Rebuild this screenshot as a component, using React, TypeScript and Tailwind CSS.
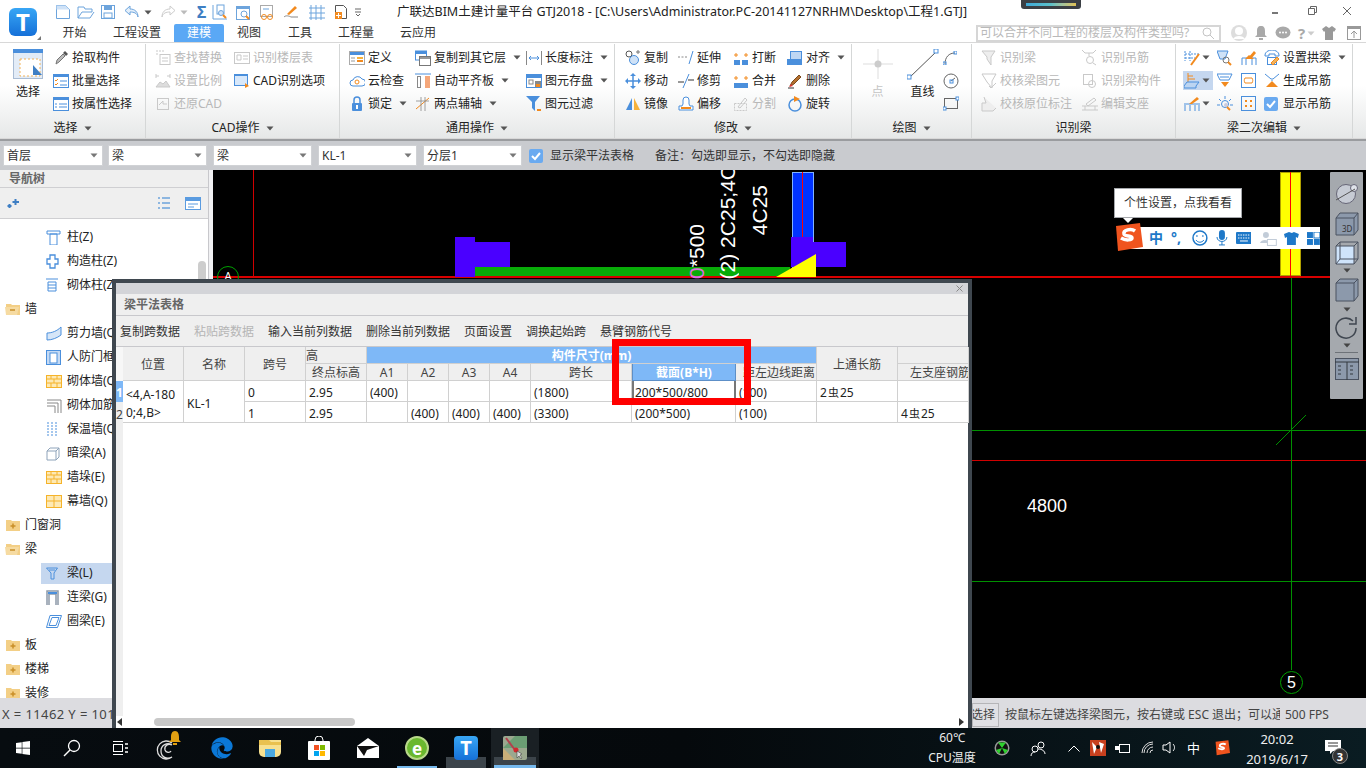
import React from "react";
import { FaEdge, FaWindows } from "react-icons/fa";

const B = "#4a8fdc";
const O = "#f28a1e";
const G = "#c9c9c9";

function S({ children, w = 16, h = 16, vb, cls = "" }: { children: React.ReactNode; w?: number; h?: number; vb?: string; cls?: string }) {
  return (
    <svg width={w} height={h} viewBox={vb ?? `0 0 ${w} ${h}`} fill="none" className={"shrink-0 " + cls}>
      {children}
    </svg>
  );
}

function Caret({ color = "#555" }: { color?: string }) {
  return (
    <svg width="8" height="5" viewBox="0 0 8 5" className="shrink-0">
      <path d="M0.5 0.5h7L4 4.5z" fill={color} />
    </svg>
  );
}

const ic: Record<string, React.ReactNode> = {
  pick: <S><path d="M3 14l1-4 6-6 2 2-6 6z" fill="#bbb" stroke="#777" /><path d="M10 3l2-2 3 3-2 2z" fill="#555" /></S>,
  batch: <S><rect x=".5" y="1.5" width="15" height="13" stroke={B} fill="#fff" /><rect x="0" y="1" width="16" height="3" fill={B} /><path d="M2 7l1 1 2-2M2 11l1 1 2-2" stroke={O} /><path d="M7 8h7M7 12h7" stroke={B} /></S>,
  attr: <S><rect x=".5" y="1.5" width="15" height="13" stroke={B} fill="#fff" /><rect x="0" y="1" width="16" height="3" fill={B} /><path d="M6 8h8M6 11h8" stroke={B} /><path d="M2 8h2M2 11h2" stroke={B} /></S>,
  find: <S><path d="M1 1h8M1 4h3" stroke={G} strokeDasharray="2 1" /><rect x="5" y="4.5" width="10" height="10" stroke={G} /><path d="M7 8h6M7 11h6" stroke={G} /></S>,
  scale: <S><path d="M1 14l4-5 3 2 3-3 4 6z" fill="#ddd" stroke={G} /><path d="M1 3h3M12 3h3M1 1v4M15 1v4" stroke={G} /></S>,
  restore: <S><rect x="2.5" y="2.5" width="11" height="11" stroke={G} /><path d="M4 9l4-4v3h4" stroke={G} /></S>,
  floor: <S><rect x=".5" y="2.5" width="15" height="11" stroke={G} /><path d="M3 5h4v5H3zM9 6h5M9 9h5" stroke={G} /></S>,
  cadopt: <S><rect x=".5" y="1.5" width="13" height="11" stroke={B} fill="#d8e8fa" /><rect x="0" y="1" width="14" height="2" fill={B} /><path d="M11 10l4 3-4 2z" fill={O} /></S>,
  def: <S><rect x=".5" y="1.5" width="15" height="13" stroke="#aaa" fill="#fff" /><rect x="1" y="2" width="14" height="3" fill={B} /><rect x="8" y="7" width="6" height="2" fill="#f7b23b" /><rect x="8" y="10" width="6" height="2" fill={O} /><path d="M2 8h4M2 11h4" stroke="#999" /></S>,
  cloud: <S><path d="M4 13a3 3 0 010-6 5 5 0 019-1 3.500 3.500 0 010 7z" stroke={B} fill="#fff" /><circle cx="8" cy="9" r="2" stroke={O} /></S>,
  lock: <S><path d="M5 7V4a3 3 0 016 0v3" stroke={B} strokeWidth="1.500" /><rect x="3" y="7" width="10" height="8" rx="1" fill={B} /><rect x="7" y="9" width="2" height="4" fill="#fff" /></S>,
  copyf: <S><rect x=".5" y="1" width="11" height="9" fill="#fff" stroke={B} /><rect x="1" y="1" width="11" height="3" fill={B} /><rect x="4.500" y="6.500" width="11" height="9" fill="#fff" stroke="#777" /><rect x="5" y="7" width="10" height="2" fill="#999" /></S>,
  auto: <S><path d="M0 1h16" stroke={B} /><rect x="2.500" y="3.500" width="3" height="11" stroke="#888" /><rect x="10" y="3" width="5" height="12" fill="#f5a77a" /></S>,
  twopt: <S><path d="M1 13L14 2" stroke={O} /><path d="M6 1v14M1 5h13M10 1v14" stroke="#888" strokeWidth=".8" /></S>,
  dim: <S><path d="M.5 1v14M15.500 1v14" stroke="#888" /><path d="M3 8h10M3 8l2-2M3 8l2 2M13 8l-2-2M13 8l-2 2" stroke={B} /></S>,
  save: <S><rect x=".5" y="1.500" width="15" height="13" stroke={B} fill="#fff" /><rect x="1" y="2" width="14" height="3" fill={B} /><rect x="3" y="7" width="4" height="4" stroke="#888" /><rect x="9" y="8" width="6" height="6" fill="#888" /><rect x="10" y="11" width="4" height="3" fill={O} /></S>,
  filter: <S><path d="M0 0h14L9 6v9L6 12V6z" fill={B} /><path d="M11 14h4" stroke={O} strokeWidth="2" /></S>,
  copy: <S><circle cx="4" cy="4" r="3" stroke="#555" /><circle cx="9" cy="10" r="4.500" stroke={B} fill="#cfe2f7" /><path d="M11 2h4M13 0v4" stroke="#777" /></S>,
  move: <S><path d="M8 1v14M1 8h14" stroke={B} strokeWidth="1.500" /><path d="M8 0l3 3H5zM8 16l3-3H5zM0 8l3-3v6zM16 8l-3-3v6z" fill={B} /></S>,
  mirror: <S><path d="M7 2v12H1z" fill={B} /><path d="M9 2v12h6z" fill="#f7b23b" /></S>,
  extend: <S><path d="M0 7h9" stroke="#888" strokeDasharray="2 1.500" /><path d="M15 1l-4 13" stroke={B} /></S>,
  trim: <S><path d="M0 9h6M10 7h6" stroke="#333" /><path d="M11 1L5 15" stroke={B} /></S>,
  offset: <S><path d="M1 14v-4h3l1-2V4a3 3 0 016 0v4l1 2h3v4z" stroke={B} fill="#fff" /><path d="M3 12h10" stroke={O} strokeWidth="2" /></S>,
  brk: <S><rect x="1" y="10" width="6" height="5" fill={B} /><rect x="9" y="10" width="6" height="5" fill={B} /><path d="M1 5h4M3 3v4M11 5h4M13 3v4" stroke={O} /></S>,
  merge: <S><rect x="1" y="10" width="14" height="5" fill={B} /><path d="M1 5h4M3 3v4M11 5h4M13 3v4" stroke={O} /></S>,
  split: <S><rect x="1.500" y="7.500" width="12" height="7" stroke={G} strokeDasharray="2 1" /><path d="M5 11l7-9 2 2-7 8z" stroke={G} /></S>,
  align: <S><rect x="3.500" y="1.500" width="11" height="8" fill="#bdd6f3" stroke={B} /><rect x="0" y="9" width="15" height="6" fill={B} /></S>,
  del: <S><path d="M1 15h6" stroke="#333" /><path d="M3 13l2-4 7-7 2 2-7 7z" fill="#b5712f" stroke="#7a4a1e" /><path d="M2 14l2-3 2 2z" fill="#d33" /></S>,
  rot: <S><circle cx="8" cy="9" r="6" stroke={B} strokeWidth="1.500" /><path d="M7 0l6 3-6 3z" fill={O} /></S>,
  arc: <S w={14} h={14}><path d="M2 13C2 6 6 2 12 2" stroke="#666" /><rect x="0" y="11" width="3" height="3" stroke={B} /><rect x="11" y="0" width="3" height="3" stroke={B} /></S>,
  circle: <S><circle cx="8" cy="8" r="7" stroke="#666" /><path d="M8 8l4-3" stroke="#666" /><rect x="7" y="7" width="3" height="3" stroke={B} /></S>,
  rect: <S><rect x="1.500" y="2.500" width="13" height="10" stroke="#666" /><rect x="13" y="1" width="3" height="3" fill="#fff" stroke={B} /><rect x="0" y="11" width="3" height="3" fill="#fff" stroke={B} /></S>,
  rb1: <S><path d="M1 1h13l-4 6v8L6 9V7z" stroke={G} fill="#eee" /></S>,
  rb2: <S><path d="M0 0l3 3h8l3-3M7 3v3" stroke={G} /><circle cx="8" cy="10" r="3.500" stroke={G} /><path d="M11 13l3 2" stroke={G} /></S>,
  rb3: <S><path d="M1 1h14l-4 7v7L6 9z" stroke={G} /><path d="M8 13l2 2 5-5" stroke={G} /></S>,
  rb4: <S><rect x="1.500" y="1.500" width="9" height="10" stroke={G} /><circle cx="10" cy="11" r="3.500" stroke={G} /></S>,
  rb5: <S><path d="M3 1l2 6H1v8h11l3-3" stroke={G} fill="#eee" /></S>,
  rb6: <S><path d="M0 10h16M0 14h16M3 14v-4M13 14v-4" stroke={G} /><path d="M4 8l8-6 2 2-8 6z" stroke={G} /></S>,
  g1: <S><path d="M1 1v10M6 1v10M1 4h14M1 8h10" stroke={B} strokeDasharray="2 1" /><path d="M7 15L15 4" stroke={O} strokeWidth="2" /></S>,
  g2: <S><path d="M0 1h11l-3 8H3z" fill="#cfe2f7" stroke={B} /><circle cx="9" cy="10" r="3" stroke="#777" /><path d="M11 12l3 3" stroke={O} strokeWidth="2" /></S>,
  g3: <S><path d="M1 15V8h14v7M5 15V9M11 15V9" stroke={B} /><path d="M7 8L13 1l2 2-5 6z" fill={O} /><path d="M4 9l4-4 5 4z" fill={O} /></S>,
  g4: <S><path d="M1 5a7 5 0 0114 0v1h-4V4H5v2H1z" stroke={B} /><rect x="3.500" y="7.500" width="9" height="7" stroke={B} /><path d="M7 13l6-6 2 2-6 6z" fill="#f2b35b" stroke={O} /></S>,
  g5: <S><path d="M4 0v9M4 3h5M4 6h7" stroke={O} /><path d="M0 13l3-4h12l-3 4v2H0z" fill="#bcd5f2" stroke={B} /></S>,
  g6: <S><path d="M0 1h15l-3 6H3z" stroke={B} /><path d="M3 4h9" stroke={B} /><path d="M4 9h8l-4 5z" fill={O} /></S>,
  g7: <S><rect x=".5" y=".5" width="14" height="14" stroke={B} /><path d="M4 5h7M4 10h7M4 5c-1 2-1 3 0 5M11 5c1 2 1 3 0 5" stroke={O} /></S>,
  g8: <S><path d="M1 1l6 5h2l6-5" stroke={B} /><path d="M8 7v1" stroke={B} /><path d="M8 8l6 6H2z" fill={O} /></S>,
  g9: <S><path d="M1 9v6M6 9v6M11 9v6M15 9v6M0 8h16" stroke={B} /><path d="M5 8l8-7 2 2-7 5z" fill={O} /></S>,
  g10: <S><circle cx="8" cy="8" r="3.500" stroke={B} /><path d="M8 0v3M2 3l2 2M14 3l-2 2M0 9h3M13 9h3" stroke={B} /><circle cx="9" cy="9" r="2" fill="#ccd" /><path d="M10 11l3 3" stroke={O} strokeWidth="2" /></S>,
  g11: <S><rect x=".5" y=".5" width="14" height="14" stroke={B} /><rect x="4" y="4" width="2" height="2" fill={O} /><rect x="9" y="4" width="2" height="2" fill={O} /><rect x="4" y="9" width="2" height="2" fill={O} /><rect x="9" y="9" width="2" height="2" fill={O} /></S>,
  chk: <svg width="14" height="14" viewBox="0 0 14 14" className="shrink-0"><rect width="14" height="14" rx="2" fill="#6aaaf0" /><path d="M3 7l3 3 5-6" stroke="#fff" strokeWidth="2" fill="none" /></svg>,
};

function Item({ i, t, off, caret, w }: { i: keyof typeof ic; t: string; off?: boolean; caret?: boolean; w: number }) {
  return (
    <div className="flex h-[23px] items-center gap-[3px]" style={{ width: w }}>
      {ic[i]}
      <span className={"whitespace-nowrap " + (off ? "text-[#b8b8b8]" : "text-[#222]")}>{t}</span>
      {caret && <span className="ml-[4px]"><Caret /></span>}
    </div>
  );
}

function Group({ w, label, caret = true, children }: { w: number; label: string; caret?: boolean; children: React.ReactNode }) {
  return (
    <div className="flex h-full shrink-0 flex-col border-r border-[#d5d7d7]" style={{ width: w }}>
      <div className="flex h-[72px] pt-[2px]">{children}</div>
      <div className="flex flex-1 items-center justify-center gap-[6px] pt-[2px] text-[#222]">
        {label}
        {caret && <Caret />}
      </div>
    </div>
  );
}

function Col({ children, pl = 0 }: { children: React.ReactNode; pl?: number }) {
  return <div className="flex flex-col" style={{ paddingLeft: pl }}>{children}</div>;
}

function Combo({ t, w }: { t: string; w: number }) {
  return (
    <div className="flex h-[21px] items-center justify-between border border-[#d0d2d5] bg-white pl-[3px] pr-[4px] text-[#333]" style={{ width: w }}>
      <span>{t}</span>
      <Caret color="#777" />
    </div>
  );
}

function Quick() {
  const c = "#6da4dc";
  return (
    <div className="flex h-[24px] items-center pl-[54px]">
      <S w={16} h={16} cls="ml-[1px]"><path d="M1.500 1.500h9l4 4v9h-13z" stroke={c} /><path d="M1.500 1.500h9l4 4H1.500z" fill="#cfe2f7" /></S>
      <S w={18} h={16} cls="ml-[6px]"><path d="M1 14V3h6l1 2h7v3H5l-4 6h12l4-6" stroke={c} /></S>
      <S w={16} h={16} cls="ml-[5px]"><rect x="1.500" y="1.500" width="13" height="13" stroke={c} /><rect x="4" y="2" width="8" height="4" fill={c} /><rect x="4" y="9" width="8" height="5" stroke={c} /></S>
      <S w={16} h={14} cls="ml-[8px]"><path d="M6 1L1 5.500 6 10V7c4 0 7 1 8 5 0-5-3-8-8-8z" stroke={c} fill="#e4effa" /></S>
      <span className="ml-[4px]"><Caret /></span>
      <S w={16} h={14} cls="ml-[8px]"><path d="M10 1l5 4.500L10 10V7c-4 0-7 1-8 5 0-5 3-8 8-8z" stroke="#ccc" /></S>
      <span className="ml-[4px]"><Caret color="#bbb" /></span>
      <span className="ml-[9px] w-[10px] text-[16px] font-bold leading-none text-[#3f7fc4]">Σ</span>
      <S w={16} h={17} cls="ml-[5px]"><path d="M1 1v14h14" stroke={c} /><rect x="5" y="1" width="7" height="9" stroke={c} /><circle cx="9" cy="9" r="2.500" fill="#cfe2f7" stroke={c} /><path d="M11 11l3 3" stroke={O} strokeWidth="2" /></S>
      <S w={17} h={17} cls="ml-[7px]"><rect x="1.500" y="2.500" width="13" height="13" stroke={c} /><rect x="1" y="2" width="14" height="3" fill={c} /><circle cx="9" cy="10" r="3" stroke={c} /><path d="M11 12l3 3" stroke={O} strokeWidth="2" /></S>
      <S w={17} h={17} cls="ml-[7px]"><rect x="1.500" y="1.500" width="12" height="11" stroke="#aaa" /><circle cx="5" cy="13" r="2.500" stroke={O} /><circle cx="11" cy="13" r="2.500" stroke={O} /><path d="M4 5h6" stroke={c} /></S>
      <S w={17} h={16} cls="ml-[7px]"><path d="M4 10l8-8 2 2-8 7z" fill={O} /><path d="M1 13c2-2 5-1 7 0h7" stroke="#888" /></S>
      <S w={18} h={17} cls="ml-[8px]"><path d="M1 4h16M1 9h16M1 14h16M3 1v15M8 1v15M13 1v15" stroke={c} /></S>
      <S w={14} h={16} cls="ml-[8px]"><path d="M1.500 1.500h8l3 3v10h-11z" stroke="#555" /><rect x="1" y="8" width="7" height="7" fill={O} /><path d="M4.500 9v5M2 11.500h5" stroke="#fff" /></S>
      <S w={8} h={9} cls="ml-[6px]"><path d="M1 1h6M1 4h6M2 6l2 2 2-2" stroke="#666" /></S>
      <span className="ml-[35px] whitespace-nowrap text-[12.5px] text-[#222]">广联达BIM土建计量平台 GTJ2018 - [C:\Users\Administrator.PC-20141127NRHM\Desktop\工程1.GTJ]</span>
    </div>
  );
}

function Tabs() {
  const tabs: [string, number, boolean?][] = [["开始", 25], ["工程设置", 48], ["建模", 50, true], ["视图", 24], ["工具", 24], ["工程量", 36], ["云应用", 36]];
  const gaps = [62, 26, 13, 13, 27, 26, 26];
  return (
    <div className="flex h-[18px] items-center pl-0">
      {tabs.map(([t, w, on], k) => (
        <span
          key={t}
          className={"flex h-[18px] items-center justify-center rounded-t-[2px] " + (on ? "bg-[#5aa8f5] text-white" : "text-[#333]")}
          style={{ width: w, marginLeft: gaps[k] }}
        >
          {t}
        </span>
      ))}
      <div className="ml-[540px] flex h-[17px] w-[245px] items-center justify-between border-2 border-[#d6d6d6] pl-[2px] pr-[5px] text-[#b9b9b9]">
        <span className="whitespace-nowrap">可以合并不同工程的楼层及构件类型吗?</span>
        <S w={12} h={12}><circle cx="5" cy="5" r="4" stroke="#c4c4c4" /><path d="M8 8l4 4" stroke="#c4c4c4" /></S>
      </div>
      <svg width="18" height="18" viewBox="0 0 18 18" className="ml-[9px]"><circle cx="9" cy="9" r="8" fill="#ddd" /><circle cx="9" cy="7" r="4" fill="#fff" /><path d="M3 15c2-4 10-4 12 0" fill="#fff" /></svg>
      <svg width="14" height="16" viewBox="0 0 14 16" className="ml-[6px]"><path d="M7 1c3 0 4 2 4 5v4l2 2H1l2-2V6c0-3 1-5 4-5z" fill="#a9a9a9" /><rect x="5" y="13" width="4" height="2" fill="#a9a9a9" /></svg>
      <svg width="16" height="14" viewBox="0 0 16 14" className="ml-[7px]"><ellipse cx="8" cy="6.500" rx="7.500" ry="6" fill="#a9a9a9" /><circle cx="5" cy="6.500" r="1" fill="#fff" /><circle cx="8" cy="6.500" r="1" fill="#fff" /><circle cx="11" cy="6.500" r="1" fill="#fff" /></svg>
      <span className="ml-[7px] text-[15px] font-bold leading-none text-[#a9a9a9]">?</span>
      <span className="ml-[2px]"><Caret color="#ccc" /></span>
      <svg width="14" height="14" viewBox="0 0 14 14" className="ml-[7px]"><path d="M4 0L0 3l2 3 1-1v9h8V5l1 1 2-3-4-3-3 2z" fill="#999" /></svg>
      <svg width="14" height="14" viewBox="0 0 14 14" className="ml-[11px]"><rect x=".5" y=".5" width="13" height="13" stroke="#999" fill="none" /><rect x="0" y="0" width="14" height="3" fill="#999" /><path d="M7 12V6M4 8l3-3 3 3" stroke="#999" fill="none" /></svg>
    </div>
  );
}

function Ribbon() {
  return (
    <div className="flex h-[97px] border-y border-[#d8d8d8] bg-gradient-to-b from-white from-45% to-[#e6e8e8] pt-[1px] text-xs">
      <Group w={146} label="选择">
        <div className="flex w-[53px] flex-col items-center pl-[3px] pt-[3px]">
          <svg width="31" height="31" viewBox="0 0 31 31"><rect x=".5" y=".5" width="29" height="29" fill="#e3ecf7" stroke="#a9bcd4" /><rect x="0" y="0" width="30" height="4" fill={B} /><rect x="7" y="10" width="20" height="17" fill="#fff" stroke="#f2b35b" strokeDasharray="2 2" /><path d="M20 16l9 10h-9z" fill="#3f7fc4" /></svg>
          <span className="mt-[4px] text-[#222]">选择</span>
        </div>
        <Col>
          <Item i="pick" t="拾取构件" w={90} />
          <Item i="batch" t="批量选择" w={90} />
          <Item i="attr" t="按属性选择" w={90} />
        </Col>
      </Group>
      <Group w={194} label="CAD操作">
        <Col pl={9}>
          <Item i="find" t="查找替换" off w={79} />
          <Item i="scale" t="设置比例" off w={79} />
          <Item i="restore" t="还原CAD" off w={79} />
        </Col>
        <Col>
          <Item i="floor" t="识别楼层表" off w={100} />
          <Item i="cadopt" t="CAD识别选项" w={100} />
        </Col>
      </Group>
      <Group w={275} label="通用操作">
        <Col pl={9}>
          <Item i="def" t="定义" w={66} />
          <Item i="cloud" t="云检查" w={66} />
          <Item i="lock" t="锁定" caret w={66} />
        </Col>
        <Col>
          <Item i="copyf" t="复制到其它层" caret w={111} />
          <Item i="auto" t="自动平齐板" caret w={111} />
          <Item i="twopt" t="两点辅轴" caret w={111} />
        </Col>
        <Col>
          <Item i="dim" t="长度标注" caret w={85} />
          <Item i="save" t="图元存盘" caret w={85} />
          <Item i="filter" t="图元过滤" w={85} />
        </Col>
      </Group>
      <Group w={237} label="修改">
        <Col pl={10}>
          <Item i="copy" t="复制" w={53} />
          <Item i="move" t="移动" w={53} />
          <Item i="mirror" t="镜像" w={53} />
        </Col>
        <Col>
          <Item i="extend" t="延伸" w={55} />
          <Item i="trim" t="修剪" w={55} />
          <Item i="offset" t="偏移" w={55} />
        </Col>
        <Col>
          <Item i="brk" t="打断" w={54} />
          <Item i="merge" t="合并" w={54} />
          <Item i="split" t="分割" off w={54} />
        </Col>
        <Col>
          <Item i="align" t="对齐" caret w={60} />
          <Item i="del" t="删除" w={60} />
          <Item i="rot" t="旋转" w={60} />
        </Col>
      </Group>
      <Group w={120} label="绘图">
        <div className="flex w-[50px] flex-col items-center pl-[1px] pt-[3px]">
          <svg width="30" height="31" viewBox="0 0 30 31"><path d="M0 15h30M15 0v30" stroke="#ddd" /><circle cx="15" cy="15" r="3.500" fill="#ccc" /></svg>
          <span className="mt-[4px] text-[#c4c4c4]">点</span>
        </div>
        <div className="flex w-[41px] flex-col items-center pt-[3px]">
          <svg width="32" height="31" viewBox="0 0 32 31"><path d="M2 29L30 2" stroke="#555" /><rect x="0" y="26" width="4" height="4" fill="#fff" stroke={B} /><rect x="27" y="0" width="4" height="4" fill="#fff" stroke={B} /></svg>
          <span className="mt-[4px] text-[#222]">直线</span>
        </div>
        <Col>
          <div className="flex h-[23px] items-center">{ic.arc}</div>
          <div className="flex h-[23px] items-center">{ic.circle}</div>
          <div className="flex h-[23px] items-center">{ic.rect}</div>
        </Col>
      </Group>
      <Group w={204} label="识别梁" caret={false}>
        <Col pl={9}>
          <Item i="rb1" t="识别梁" off w={101} />
          <Item i="rb3" t="校核梁图元" off w={101} />
          <Item i="rb5" t="校核原位标注" off w={101} />
        </Col>
        <Col>
          <Item i="rb2" t="识别吊筋" off w={90} />
          <Item i="rb4" t="识别梁构件" off w={90} />
          <Item i="rb6" t="编辑支座" off w={90} />
        </Col>
      </Group>
      <Group w={177} label="梁二次编辑">
        <Col pl={7}>
          <div className="flex h-[23px] w-[30px] items-center gap-[2px] pl-[1px]">{ic.g1}<Caret /></div>
          <div className="my-[2px] flex h-[19px] w-[30px] items-center gap-[2px] bg-[#c5d7ef] pl-[1px]">{ic.g5}<Caret /></div>
          <div className="flex h-[23px] w-[30px] items-center gap-[2px] pl-[1px]">{ic.g9}<Caret /></div>
        </Col>
        <Col pl={4}>
          <div className="flex h-[23px] items-center">{ic.g2}</div>
          <div className="flex h-[23px] items-center">{ic.g6}</div>
          <div className="flex h-[23px] items-center">{ic.g10}</div>
        </Col>
        <Col pl={8}>
          <div className="flex h-[23px] items-center">{ic.g3}</div>
          <div className="flex h-[23px] items-center">{ic.g7}</div>
          <div className="flex h-[23px] items-center">{ic.g11}</div>
        </Col>
        <Col pl={7}>
          <Item i="g4" t="设置拱梁" caret w={90} />
          <Item i="g8" t="生成吊筋" w={90} />
          <div className="flex h-[23px] items-center gap-[5px]">{ic.chk}<span className="text-[#222]">显示吊筋</span></div>
        </Col>
      </Group>
    </div>
  );
}

function OptionBar() {
  return (
    <div className="flex h-[31px] items-center border-t-2 border-[#9a9c9f] bg-[#c9cbcf] pl-[3px] text-xs">
      <Combo t="首层" w={100} />
      <span className="ml-[5px]"><Combo t="梁" w={99} /></span>
      <span className="ml-[6px]"><Combo t="梁" w={99} /></span>
      <span className="ml-[6px]"><Combo t="KL-1" w={99} /></span>
      <span className="ml-[6px]"><Combo t="分层1" w={99} /></span>
      <span className="ml-[7px]">{ic.chk}</span>
      <span className="ml-[7px] text-[#333]">显示梁平法表格</span>
      <span className="ml-[21px] text-[#333]">备注：勾选即显示，不勾选即隐藏</span>
    </div>
  );
}

function Member({ t, icon, sel }: { t: string; icon: React.ReactNode; sel?: boolean }) {
  return (
    <div className="flex h-[24px] items-center pl-[5px]">
      <div className={"ml-[36px] flex h-[21px] flex-1 items-center pl-[5px] " + (sel ? "bg-[#c5d7ef]" : "")}>
        <span className="flex w-[21px] shrink-0 items-center">{icon}</span>
        <span className="whitespace-nowrap text-[#222]">{t}</span>
      </div>
    </div>
  );
}

function Folder({ t, open }: { t: string; open?: boolean }) {
  return (
    <div className="flex h-[24px] items-center pl-[5px]">
      <svg width="17" height="14" viewBox="0 0 17 14" className="shrink-0">
        <path d="M1 2h5l1 1h8v10H1z" fill="#f3cf86" />
        {open ? <path d="M0 5h14l-2 8H1z" fill="#f6dba2" /> : null}
        <path d={open ? "M5 8h5" : "M5.500 8h5M8 5.500v5"} stroke="#c98f28" strokeWidth="1.500" />
      </svg>
      <span className="ml-[3px] whitespace-nowrap text-[#222]">{t}</span>
    </div>
  );
}

function Tree() {
  const bl = B;
  const Yb = ({ kind = 0 }: { kind?: number }) => (
    <S w={16} h={13}><rect x=".5" y=".5" width="15" height="12" stroke="#f5b32a" fill="#fde9b5" /><path d={kind ? "M0 6h16M8 0v13" : "M0 4h16M0 8h16M5 0v4M11 0v4M8 4v4M5 8v5M11 8v5"} stroke="#f5b32a" /></S>
  );
  return (
    <div className="w-[213px] shrink-0 bg-[#f1f1f3]">
      <div className="relative flex h-full w-[209px] flex-col overflow-hidden border-r border-[#c8c8cc] bg-white text-xs">
        <div className="flex h-[19px] items-center border-b border-[#cfcfd2] bg-[#efefef] pl-[9px] pt-[1px] font-bold text-[#666]">导航树</div>
        <div className="flex h-[31px] shrink-0 items-center border-b border-[#cfcfd2] bg-[#efefef] pl-[7px] pt-[1px]">
          <svg width="13" height="10" viewBox="0 0 13 10"><path d="M2.500 5v4M.5 7h4M8.500 0v6M5.500 3h6.500" stroke="#3f7fc4" strokeWidth="2" /></svg>
          <svg width="14" height="13" viewBox="0 0 14 13" className="ml-[137px]"><path d="M1 1h2M1 6h2M1 11h2M5 1h8M5 6h8M5 11h8" stroke="#6da4dc" strokeWidth="1.500" /></svg>
          <svg width="16" height="13" viewBox="0 0 16 13" className="ml-[14px]"><rect x=".5" y=".5" width="15" height="12" stroke="#5a9be0" fill="#fff" /><rect x="0" y="0" width="16" height="4" fill="#5a9be0" /><path d="M3 7h10M3 10h6" stroke="#5a9be0" /></svg>
        </div>
        <div className="flex flex-col pt-[6px]">
          <Member t="柱(Z)" icon={<S w={15} h={15}><path d="M1 1h13v3H1zM4 4h7v11H4z" stroke={bl} /></S>} />
          <Member t="构造柱(Z)" icon={<S w={13} h={15}><path d="M4 1h5v4h3v5H9v4H4v-4H1V5h3z" stroke={bl} strokeWidth="1.300" /></S>} />
          <Member t="砌体柱(Z)" icon={<S w={12} h={14}><path d="M0 1h12M2 4h8v9H2zM2 7h8M2 10h8" stroke={bl} /></S>} />
          <Folder t="墙" open />
          <Member t="剪力墙(Q)" icon={<S w={16} h={15}><path d="M1 7c5 0 10-2 14-6v8c-4 3-9 5-14 5z" fill="#d6e6f8" stroke={bl} /></S>} />
          <Member t="人防门框墙" icon={<S w={15} h={15}><rect x=".5" y=".5" width="14" height="14" fill="#c5daf4" stroke={bl} /><rect x="4" y="3" width="7" height="10" fill="#fff" stroke={bl} /></S>} />
          <Member t="砌体墙(Q)" icon={<Yb />} />
          <Member t="砌体加筋(Y)" icon={<S w={16} h={15}><path d="M1 2h14v13M1 5h11v10M1 8h8v7" stroke="#888" /></S>} />
          <Member t="保温墙(Q)" icon={<S w={12} h={15}><path d="M2 0v15M6 0v15M10 0v15" stroke={bl} strokeDasharray="2 1" /></S>} />
          <Member t="暗梁(A)" icon={<S w={14} h={15}><path d="M1 5l3-3h9v9l-3 3H1z" fill="#fff" stroke="#8ea3ba" /><path d="M1 5h9v9M10 5l3-3" stroke="#8ea3ba" /></S>} />
          <Member t="墙垛(E)" icon={<Yb />} />
          <Member t="幕墙(Q)" icon={<Yb kind={1} />} />
          <Folder t="门窗洞" />
          <Folder t="梁" open />
          <Member sel t="梁(L)" icon={<S w={13} h={13}><path d="M.5 1h11L8 6v6H5V6z" stroke={bl} /><path d="M3 3h6" stroke={bl} /></S>} />
          <Member t="连梁(G)" icon={<S w={14} h={15}><path d="M1 15V1h11v14M3 15V4h7v11" stroke="#8d99a8" strokeWidth="1.500" /><rect x="2" y="2" width="9" height="2" fill={bl} /></S>} />
          <Member t="圈梁(E)" icon={<S w={16} h={13}><path d="M4 .5h11.500l-4 12H.5z" stroke={bl} /><path d="M6 2.500h7L10 10.500H3z" stroke={bl} /></S>} />
          <Folder t="板" />
          <Folder t="楼梯" />
          <Folder t="装修" />
        </div>
        <div className="absolute left-[198px] top-[91px] h-[40px] w-[8px] rounded-full bg-[#cdcdcd]" />
      </div>
    </div>
  );
}

const H = "flex items-center justify-center overflow-hidden whitespace-nowrap border-b border-r border-[#d0d0d0] bg-[#efefef] pt-[2px] text-[#444]";
const C = "flex items-center overflow-hidden whitespace-nowrap border-b border-r border-[#d0d0d0] bg-white pl-[3px] pt-[4px] text-[#222]";

function Dialog() {
  return (
    <div className="absolute left-[112px] top-[279px] flex h-[449px] w-[860px] flex-col border-[4px] border-b-0 border-[#3f474f] bg-white text-xs">
      <div className="flex h-[11px] items-center justify-end bg-[#d3d4d8] pr-[5px]">
        <svg width="7" height="7" viewBox="0 0 7 7"><path d="M.5.5l6 6M6.500.5l-6 6" stroke="#888" /></svg>
      </div>
      <div className="flex h-[22px] items-center border-b border-[#c8c8cc] bg-[#efefef] pl-[8px] pt-[1px] font-bold text-[#666]">梁平法表格</div>
      <div className="flex h-[31px] items-center border-b border-[#c8c8cc] bg-[#efefef] pl-[4px] pt-[1px] text-[#333]">
        <span>复制跨数据</span>
        <span className="ml-[14px] text-[#b5b5b5]">粘贴跨数据</span>
        <span className="ml-[14px]">输入当前列数据</span>
        <span className="ml-[14px]">删除当前列数据</span>
        <span className="ml-[14px]">页面设置</span>
        <span className="ml-[14px]">调换起始跨</span>
        <span className="ml-[14px]">悬臂钢筋代号</span>
      </div>
      <div className="grid grid-cols-[7px_61px_61px_61px_61px_41px_41px_41px_41px_101px_104px_81px_81px_71px] grid-rows-[17px_17px_21px_21px]">
        <div className="row-span-2 bg-[#f7f7f7]" />
        <div className={H + " row-span-2"}>位置</div>
        <div className={H + " row-span-2"}>名称</div>
        <div className={H + " row-span-2"}>跨号</div>
        <div className={H + " !justify-start"}>高</div>
        <div className={H + " col-span-7 !bg-[#7eb8f7] font-bold !text-white"}>构件尺寸(mm)</div>
        <div className={H + " row-span-2"}>上通长筋</div>
        <div className={H} />
        <div className={H}>终点标高</div>
        <div className={H}>A1</div>
        <div className={H}>A2</div>
        <div className={H}>A3</div>
        <div className={H}>A4</div>
        <div className={H}>跨长</div>
        <div className={H + " border-l !border-[#5d8fc7] !bg-[#7eb8f7] font-bold !text-white"}>截面(B*H)</div>
        <div className={H + " !justify-end pr-[1px]"}>距左边线距离</div>
        <div className={H + " !justify-start pl-[12px]"}>左支座钢筋</div>

        <div className="flex items-center justify-center bg-[#7eb8f7] pt-[2px] font-bold text-white">1</div>
        <div className={C + " row-span-2 !whitespace-normal leading-[18px]"}><span>&lt;4,A-180<br />0;4,B&gt;</span></div>
        <div className={C + " row-span-2"}>KL-1</div>
        <div className={C}>0</div>
        <div className={C}>2.95</div>
        <div className={C}>(400)</div>
        <div className={C} />
        <div className={C} />
        <div className={C} />
        <div className={C}>(1800)</div>
        <div className={C + " border-l-2 border-r-2 !border-x-[#777] !pl-[1px]"}>200*500/800</div>
        <div className={C}>(100)</div>
        <div className={C}>2<span className="mx-[1px] text-[11px]">虫</span>25</div>
        <div className={C} />

        <div className="flex items-center justify-center bg-[#efefef] pt-[4px] text-[#444]">2</div>
        <div className={C}>1</div>
        <div className={C}>2.95</div>
        <div className={C} />
        <div className={C}>(400)</div>
        <div className={C}>(400)</div>
        <div className={C}>(400)</div>
        <div className={C}>(3300)</div>
        <div className={C}>(200*500)</div>
        <div className={C}>(100)</div>
        <div className={C} />
        <div className={C}>4<span className="mx-[1px] text-[11px]">虫</span>25</div>
      </div>
      <div className="flex flex-1 flex-col">
        <div className="flex-1 border-l-[7px] border-[#efefef]" />
        <div className="flex h-[12px] items-center px-[1px]">
          <svg width="5" height="8" viewBox="0 0 5 8"><path d="M5 0v8L0 4z" fill="#333" /></svg>
          <div className="ml-[32px] h-[8px] w-[201px] rounded-full bg-[#c8c8c8]" />
          <svg width="5" height="8" viewBox="0 0 5 8" className="ml-auto mr-[3px]"><path d="M0 0v8l5-4z" fill="#333" /></svg>
        </div>
      </div>
      <div className="absolute left-[496px] top-[56px] h-[66px] w-[139px] border-[7px] border-[#ff0000]" />
    </div>
  );
}

function CanvasLayer() {
  const vert = "absolute [writing-mode:vertical-rl] rotate-180 whitespace-nowrap font-['Liberation_Sans',sans-serif] text-white";
  return (
    <div className="relative flex-1 overflow-hidden bg-black">
      <div className="absolute left-[40px] top-0 h-[107px] w-px bg-[#d00000]" />
      <div className="absolute left-0 top-[106px] h-[2px] w-[1120px] bg-[#d80000]" />
      <div className="absolute left-[759px] top-[290px] h-px w-[394px] bg-[#d00000]" />
      <div className="absolute left-[759px] top-[260px] h-px w-[394px] bg-[#009000]" />
      <div className="absolute left-[759px] top-[411px] h-px w-[394px] bg-[#009000]" />
      <div className="absolute left-[1078px] top-[108px] h-[392px] w-px bg-[#009000]" />
      <svg width="30" height="30" viewBox="0 0 30 30" className="absolute left-[1063px] top-[245px]"><path d="M0 30L30 0" stroke="#009000" /></svg>
      <div className="absolute left-[1067px] top-[2px] h-[104px] w-[21px] border border-[#b0a000] bg-[#ffff00]" />
      <div className="absolute left-[1077px] top-[2px] h-[104px] w-px bg-[#ff0000]" />
      <div className="absolute left-[579px] top-[2px] h-[104px] w-[22px] border border-[#7fb2ff] bg-[#0033ff]" />
      <div className="absolute left-[589px] top-[2px] h-[104px] w-px bg-[#ff0000]" />
      <div className="absolute left-[242px] top-[67px] h-[40px] w-[20px] bg-[#4a00ff]" />
      <div className="absolute left-[262px] top-[72px] h-[26px] w-[35px] bg-[#4a00ff]" />
      <div className="absolute left-[578px] top-[67px] h-[30px] w-[22px] bg-[#4a00ff]" />
      <div className="absolute left-[600px] top-[72px] h-[25px] w-[33px] bg-[#4a00ff]" />
      <div className="absolute left-[262px] top-[97px] h-[9px] w-[315px] bg-[#08ab08]" />
      <svg width="40" height="24" viewBox="0 0 40 24" className="absolute left-[563px] top-[83px]"><path d="M0 24L40 1v23z" fill="#ffff00" /></svg>
      <div className={vert + " bottom-[419px] left-[472px] text-[21px] leading-[24px]"}><span className="text-[#e070e0]">0</span>*500</div>
      <div className={vert + " bottom-[419px] left-[503px] text-[21px] leading-[24px]"}>(2) 2C25;4C</div>
      <div className={vert + " left-[535px] top-[15px] text-[21px] leading-[24px]"}>4C25</div>
      <div className="absolute left-[4px] top-[96px] flex h-[22px] w-[22px] items-center justify-center rounded-full border border-[#00a000] text-xs text-white">A</div>
      <div className="absolute left-[1067px] top-[501px] flex h-[23px] w-[23px] items-center justify-center rounded-full border border-[#00a000] font-['Liberation_Sans',sans-serif] text-[16px] text-white">5</div>
      <div className="absolute left-[814px] top-[327px] font-['Liberation_Sans',sans-serif] text-[18px] text-white">4800</div>

      {/* IME */}
      <div className="absolute left-[901px] top-[18px] flex h-[30px] w-[128px] items-center justify-center border border-[#a5a8ac] bg-white text-xs text-[#333]">个性设置，点我看看</div>
      <svg width="10" height="5" viewBox="0 0 10 5" className="absolute left-[910px] top-[48px]"><path d="M0 0h10L5 5z" fill="#fff" /></svg>
      <div className="absolute left-[917px] top-[57px] flex h-[22px] w-[190px] items-center bg-white pl-[19px]">
        <span className="text-[14px] font-bold leading-none text-[#1e78c8]">中</span>
        <span className="ml-[8px] w-[14px] text-[14px] font-bold leading-none text-[#1e78c8]">°,</span>
        <svg width="16" height="16" viewBox="0 0 16 16" className="ml-[7px]"><circle cx="8" cy="8" r="7" stroke="#1e78c8" strokeWidth="1.500" fill="none" /><path d="M5 5v2M11 5v2M4 10c2 3 6 3 8 0" stroke="#1e78c8" fill="none" /></svg>
        <svg width="12" height="16" viewBox="0 0 12 16" className="ml-[8px]"><rect x="3" y="0" width="6" height="10" rx="3" fill="#1e78c8" /><path d="M1 7c0 6 10 6 10 0M6 12v3M3 15h6" stroke="#1e78c8" fill="none" /></svg>
        <svg width="16" height="12" viewBox="0 0 16 12" className="ml-[8px]"><rect width="16" height="12" rx="1" fill="#1e78c8" /><path d="M2 3h12M2 6h12" stroke="#fff" strokeDasharray="1.500 1" /><path d="M4 9h8" stroke="#fff" /></svg>
        <svg width="17" height="15" viewBox="0 0 17 15" className="ml-[9px]"><circle cx="6" cy="4" r="3" fill="#c2ccd8" /><path d="M0 12c1-4 9-4 10 0z" fill="#c2ccd8" /><rect x="7.500" y="8.500" width="9" height="6" fill="#fff" stroke="#c2ccd8" /></svg>
        <svg width="15" height="13" viewBox="0 0 15 13" className="ml-[7px]"><path d="M5 0L0 2l1 4 2-1v8h9V5l2 1 1-4-5-2-2 1z" fill="#1e78c8" /></svg>
        <svg width="13" height="13" viewBox="0 0 13 13" className="ml-[8px]"><rect width="6" height="6" fill="#1e78c8" /><rect x="7" y="0" width="6" height="6" fill="#fff" stroke="#1e78c8" /><rect y="7" width="6" height="6" fill="#1e78c8" /><rect x="7" y="7" width="6" height="6" fill="#1e78c8" /></svg>
      </div>
      <svg width="30" height="29" viewBox="0 0 30 29" className="absolute left-[900px] top-[53px]">
        <path d="M3 3l24-3 3 24-25 4z" fill="#f0541e" />
        <path d="M22 8c-4-3-12-1-11 3 1 3 8 1 8 4 0 2-6 3-11 0" stroke="#fff" strokeWidth="3.500" fill="none" />
      </svg>

      {/* view toolbar */}
      <div className="absolute left-[1117px] top-[2px] flex h-[227px] w-[33px] flex-col items-center rounded-[1px] bg-[#a5a9ae] pt-[11px]">
        <svg width="24" height="22" viewBox="0 0 24 22"><circle cx="11" cy="11" r="9.500" fill="#c6cbd4" stroke="#667" /><circle cx="19" cy="5" r="3.500" fill="#dfe3ea" stroke="#667" /><path d="M1 17L20 6" stroke="#555" /></svg>
        <svg width="24" height="24" viewBox="0 0 24 24" className="mt-[7px]"><path d="M1 6h18v17H1zM1 6l4-5h18v17l-4 5M19 6l4-5" fill="#8c99ab" stroke="#4a5260" /><text x="7" y="20" fontSize="8" fill="#333">3D</text></svg>
        <svg width="24" height="24" viewBox="0 0 24 24" className="mt-[5px]"><path d="M1 5h18v18H1z" fill="#cfe4fb" stroke="#4a5260" /><path d="M1 5l4-4h18v17l-4 5M19 5l4-4M5 1v17h18M5 18l-4 5" fill="none" stroke="#4a5260" /></svg>
        <span className="mt-[3px]"><Caret color="#444" /></span>
        <svg width="24" height="24" viewBox="0 0 24 24" className="mt-[5px]"><path d="M1 5h18v18H1zM1 5l4-4h18v17l-4 5M19 5l4-4" fill="#8c99ab" stroke="#4a5260" /></svg>
        <span className="mt-[5px]"><Caret color="#444" /></span>
        <svg width="24" height="23" viewBox="0 0 24 23" className="mt-[4px]"><path d="M21 12a10 10 0 11-3-7" stroke="#3f4650" strokeWidth="1.500" fill="none" /><path d="M21 1v7h-7" stroke="#3f4650" strokeWidth="1.500" fill="none" /></svg>
        <span className="mt-[4px]"><Caret color="#444" /></span>
        <div className="mt-[4px] h-px w-[23px] bg-[#6d7278]" />
        <svg width="24" height="23" viewBox="0 0 24 23" className="mt-[4px]"><rect x=".5" y="1.500" width="23" height="21" fill="#8c99ab" stroke="#4a5260" /><path d="M0 5h24M12 5v18M3 9h3M3 13h3M3 17h3M15 9h3M15 13h3M15 17h3" stroke="#33383f" /></svg>
      </div>
    </div>
  );
}

function Status() {
  return (
    <div className="flex h-[30px] items-center bg-[#dcdce0] pt-[3px] text-xs text-[#444]">
      <span className="w-[112px] shrink-0 overflow-hidden whitespace-nowrap pl-[2px] text-[13px] tracking-[0.4px]">X = 11462 Y = 101</span>
      <div className="ml-[860px] flex h-[24px] w-[27px] shrink-0 items-center justify-end overflow-hidden border border-[#b5b5b8] bg-[#e0e0e4] pr-[3px]">
        <span className="whitespace-nowrap">选择</span>
      </div>
      <span className="ml-[6px] w-[275px] shrink-0 overflow-hidden whitespace-nowrap">按鼠标左键选择梁图元，按右键或 ESC 退出；可以通</span>
      <span className="ml-[5px] whitespace-nowrap">500 FPS</span>
    </div>
  );
}

function Taskbar() {
  return (
    <div className="relative flex h-[40px] items-center bg-gradient-to-r from-[#070c10] via-[#05090c] to-[#0a1c22] text-xs text-white">
      <div className="absolute left-[491px] top-0 h-[40px] w-[48px] bg-[#1a2024]" />
      <div className="absolute left-[446px] top-[29px] h-[11px] w-[40px] bg-[#3c444a]" />
      <div className="absolute left-[494px] top-[29px] h-[8px] w-[42px] bg-[#3c444a]" />
      <div className="absolute bottom-0 left-[397px] h-[2px] w-[40px] bg-[#76b9ed]" />
      <div className="absolute bottom-0 left-[494px] h-[3px] w-[42px] bg-[#76b9ed]" />
      <FaWindows className="relative ml-[15px] text-[16px]" />
      <svg width="18" height="18" viewBox="0 0 18 18" className="relative ml-[32px]"><circle cx="11" cy="7" r="5.500" stroke="#fff" strokeWidth="1.300" fill="none" /><path d="M7 11l-6 6" stroke="#fff" strokeWidth="1.500" /></svg>
      <svg width="16" height="16" viewBox="0 0 16 16" className="relative ml-[31px]"><rect x="1.500" y="4.500" width="9" height="7" stroke="#fff" fill="none" /><path d="M1 1.500h10M1 14.500h10" stroke="#fff" /><path d="M13 4h3M13 8h3M13 12h3" stroke="#fff" strokeWidth="1.500" /></svg>
      <span className="relative ml-[28px] h-[24px] w-[24px]">
        <svg width="24" height="24" viewBox="0 0 24 24" className="absolute top-[2px]"><path d="M16 5a9 9 0 100 14c-5 3-11 0-11-6a7 7 0 0111-6c-4-2-8 1-7 5 1 3 5 3 6 1" stroke="#ddd" strokeWidth="1.300" fill="none" /></svg>
        <svg width="14" height="15" viewBox="0 0 14 15" className="absolute left-[12px] top-[-5px]"><path d="M7 0c3 0 4 3 4 6v3l2 2H1l2-2V6c0-3 1-6 4-6z" fill="#e2a012" /><rect x="5" y="12" width="4" height="2" fill="#e2a012" /></svg>
      </span>
      <FaEdge className="relative ml-[31px] text-[22px] text-[#0b78d7]" />
      <svg width="24" height="22" viewBox="0 0 24 22" className="relative ml-[25px]"><path d="M1 3h22v12a5 5 0 01-5 5H6a5 5 0 01-5-5z" fill="#f7e08f" /><path d="M1 3h10l2 2h10v3H1z" fill="#e9c14f" /><rect x="7" y="12" width="10" height="8" fill="#4aa8e0" /></svg>
      <svg width="22" height="24" viewBox="0 0 22 24" className="relative ml-[26px]"><rect y="5" width="22" height="19" rx="1" fill="#fff" /><path d="M7 7V4a4 4 0 018 0v3" stroke="#fff" fill="none" /><rect x="6" y="9" width="5" height="5" fill="#f25022" /><rect x="12" y="9" width="5" height="5" fill="#7fba00" /><rect x="6" y="15" width="5" height="5" fill="#00a4ef" /><rect x="12" y="15" width="5" height="5" fill="#ffb900" /></svg>
      <svg width="22" height="20" viewBox="0 0 22 20" className="relative ml-[27px]"><path d="M0 8L11 0l11 8v12H0z" fill="#fff" /><path d="M0 8l22 0-12 4-3 6z" fill="#111" /></svg>
      <span className="relative ml-[26px] flex h-[24px] w-[24px] items-center justify-center rounded-full border-2 border-[#b9d98a] bg-[#6ab82f] text-[17px] font-bold leading-none text-white">e</span>
      <span className="relative ml-[25px] flex h-[24px] w-[24px] items-center justify-center rounded-[4px] bg-gradient-to-b from-[#38a6f5] to-[#1670d8] text-[20px] font-bold leading-none text-white">T</span>
      <svg width="24" height="24" viewBox="0 0 24 24" className="relative ml-[25px]"><rect width="24" height="24" rx="2" fill="#9ba88f" /><path d="M0 12L12 0h12v12z" fill="#6b9e74" /><path d="M0 24V12l12 12z" fill="#c9ae78" /><path d="M3 2l9 12" stroke="#b2404d" strokeWidth="2" /><circle cx="13" cy="14" r="2.500" fill="#d1282e" /><path d="M14 15v7l2-2 2 3 1-1-2-3 2-1z" fill="#ddd" stroke="#333" strokeWidth=".5" /></svg>

      <div className="absolute left-[927px] top-[2px] flex h-[36px] w-[50px] flex-col items-center justify-between leading-[16px] text-[#eee]">
        <span>60℃</span>
        <span className="whitespace-nowrap">CPU温度</span>
      </div>
      <svg width="16" height="16" viewBox="0 0 16 16" className="absolute left-[994px] top-[12px]"><circle cx="8" cy="8" r="7.500" fill="#999" /><circle cx="8" cy="8" r="6" fill="#111" /><path d="M8 8L4 2.500h8zM8 8L2 10l3 4zM8 8l6 2-3 4z" fill="#2fd12f" /></svg>
      <svg width="16" height="15" viewBox="0 0 16 15" className="absolute left-[1030px] top-[13px]"><circle cx="5" cy="8" r="3" stroke="#fff" fill="none" /><circle cx="11" cy="4" r="3" stroke="#fff" fill="none" /><path d="M1 15c0-3 2-4 4-4M8 8c4 0 7 2 7 5" stroke="#fff" fill="none" /></svg>
      <svg width="12" height="7" viewBox="0 0 12 7" className="absolute left-[1068px] top-[17px]"><path d="M.5 6.500L6 1l5.500 5.500" stroke="#fff" fill="none" /></svg>
      <svg width="16" height="16" viewBox="0 0 16 16" className="absolute left-[1090px] top-[12px]"><rect width="16" height="16" fill="#c8401e" /><path d="M2 2l5 5-3 7zM9 2l5 2-3 9z" fill="#fff" /><circle cx="8" cy="7" r="2" fill="#111" /></svg>
      <svg width="16" height="12" viewBox="0 0 16 12" className="absolute left-[1114px] top-[14px]"><rect x="5.500" y="2.500" width="10" height="8" stroke="#fff" fill="none" /><rect x="1" y="4" width="5" height="4" fill="#fff" /></svg>
      <svg width="13" height="13" viewBox="0 0 13 13" className="absolute left-[1141px] top-[13px]"><path d="M1 12a11 11 0 0111-11M3 12a9 9 0 019-9M6 12a6 6 0 016-6M9 12a3 3 0 013-3" stroke="#ddd" fill="none" /></svg>
      <svg width="16" height="13" viewBox="0 0 16 13" className="absolute left-[1162px] top-[13px]"><path d="M1 4h3l4-3v11L4 9H1z" stroke="#fff" fill="none" /><path d="M11 3c2 2 2 5 0 7" stroke="#fff" fill="none" /></svg>
      <span className="absolute left-[1187px] top-[11px] text-[13px] leading-[18px]">中</span>
      <svg width="16" height="16" viewBox="0 0 30 29" className="absolute left-[1214px] top-[12px]"><path d="M3 3l24-3 3 24-25 4z" fill="#f0541e" /><path d="M22 8c-4-3-12-1-11 3 1 3 8 1 8 4 0 2-6 3-11 0" stroke="#fff" strokeWidth="3.500" fill="none" /></svg>
      <div className="absolute left-[1247px] top-[3px] flex h-[36px] w-[60px] flex-col items-center justify-between text-[13px] leading-[16px] text-[#eee]">
        <span>20:02</span>
        <span>2019/6/17</span>
      </div>
      <svg width="17" height="15" viewBox="0 0 17 15" className="absolute left-[1325px] top-[12px]"><path d="M0 0h16v11H8l-3 3v-3H0z" fill="#fff" /><path d="M3 3h10M3 6h10" stroke="#333" /></svg>
      <span className="absolute left-[1332px] top-[20px] flex h-[16px] w-[16px] items-center justify-center rounded-full border border-[#888] bg-[#333] text-[11px] font-bold leading-none text-white">3</span>
    </div>
  );
}

export default function App() {
  return (
    <div className="relative flex h-[768px] w-[1366px] flex-col overflow-hidden bg-white font-['Noto_Sans','Noto_Sans_CJK_SC',sans-serif] text-xs leading-none">
      <div className="relative h-[42px] shrink-0 bg-white">
        <Quick />
        <Tabs />
        <div className="absolute left-[9px] top-[8px] flex h-[28px] w-[28px] items-center justify-center rounded-[6px] bg-gradient-to-b from-[#38a6f5] to-[#1670d8] text-[24px] font-bold leading-none text-white">T</div>
        <svg width="4" height="4" viewBox="0 0 4 4" className="absolute left-[37px] top-[36px]"><path d="M4 0v4H0z" fill="#777" /></svg>
        <div className="absolute left-[1021px] top-0 flex h-[9px] w-[60px] items-center rounded-b-[3px] bg-[#3b3f44] px-[5px]">
          <div className="h-[3px] w-full bg-gradient-to-r from-[#3fa9d8] via-[#5bc0c8] to-[#e0c050]" />
        </div>
        <div className="absolute left-[1272px] top-[12px] h-[2px] w-[6px] bg-[#777]" />
        <svg width="9" height="9" viewBox="0 0 9 9" className="absolute left-[1308px] top-[6px]"><path d="M.5 2.500h6v6h-6zM2.500 2.500v-2h6v6h-2" stroke="#666" fill="none" /></svg>
        <svg width="10" height="10" viewBox="0 0 10 10" className="absolute left-[1342px] top-[6px]"><path d="M1 1l8 8M9 1l-8 8" stroke="#666" /></svg>
      </div>
      <Ribbon />
      <OptionBar />
      <div className="flex min-h-0 flex-1">
        <Tree />
        <CanvasLayer />
      </div>
      <Status />
      <Taskbar />
      <Dialog />
    </div>
  );
}
